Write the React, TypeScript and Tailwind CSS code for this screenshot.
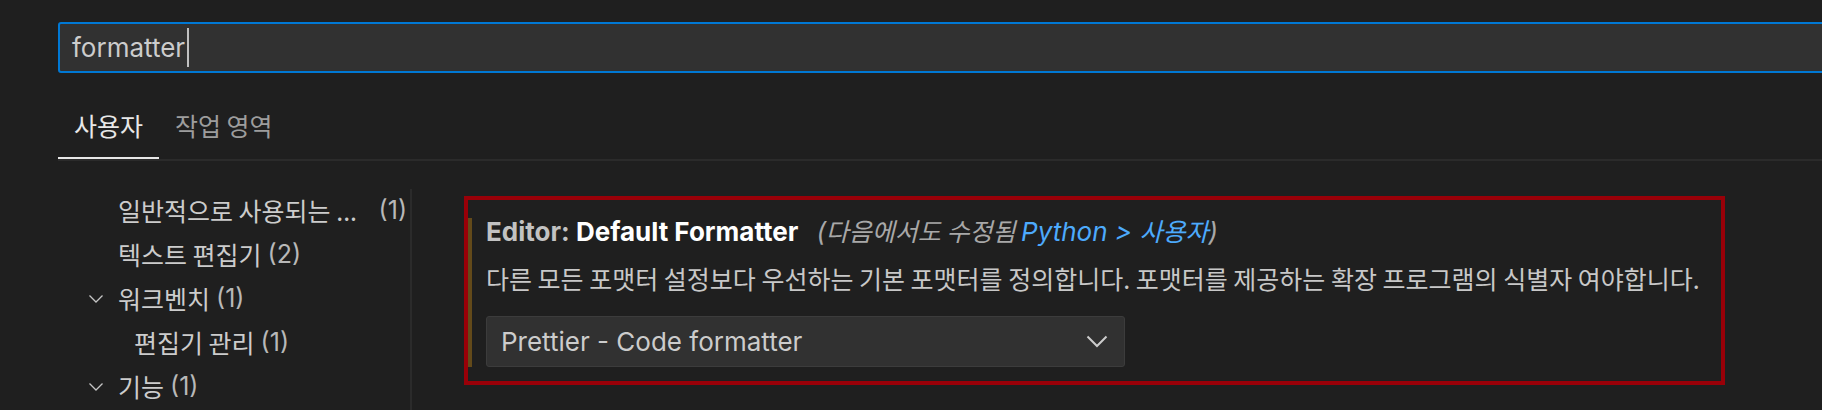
import React from "react";

const KR = "font-['Noto_Sans_CJK_KR','Inter',sans-serif]";

function TreeChevron() {
  return (
    <svg width="16" height="10" viewBox="0 0 16 10" className="block">
      <polyline points="1.5,1.5 8,8 14.5,1.5" fill="none" stroke="#c5c5c5" strokeWidth="1.3" />
    </svg>
  );
}

function Row({ chevron, indent, label, count, spread }: { chevron?: boolean; indent?: boolean; label: string; count: string; spread?: boolean }) {
  return (
    <div className="h-[44px] flex items-center pl-[30px] pr-[3px]">
      <div className="w-[16px] shrink-0 flex items-center">{chevron ? <TreeChevron /> : null}</div>
      <div className={`flex items-center flex-1 ${indent ? "ml-[30px]" : "ml-[14px]"} ${spread ? "justify-between" : ""}`}>
        <span className={`${KR} text-[25px] text-[#cccccc] whitespace-pre`}>{label}</span>
        <span className={`font-['Inter',sans-serif] text-[25px] text-[#b8b8b8] ${spread ? "" : "ml-[6px]"}`}>{count}</span>
      </div>
    </div>
  );
}

export default function App() {
  return (
    <div className="w-[1822px] h-[410px] overflow-hidden bg-[#1f1f1f] font-['Inter','Noto_Sans_CJK_KR',sans-serif]">
      {/* search */}
      <div className="pt-[22px] pl-[58px]">
        <div className="h-[51px] w-[1800px] border-2 border-[#0078d4] rounded-[3px] bg-[#313131] flex items-center pl-[12px]">
          <span className="text-[26px] text-[#cccccc] leading-none">formatter</span>
          <span className="w-[2px] h-[39px] bg-[#c0c0c0] ml-[2px]" />
        </div>
      </div>
      {/* tabs */}
      <div className="ml-[58px] mt-[22px] flex border-b-2 border-[#2b2b2b]">
        <div className={`h-[64px] px-[16px] flex items-center border-b-2 border-[#e7e7e7] ${KR} text-[25px] text-[#e7e7e7]`}>사용자</div>
        <div className={`h-[64px] px-[16px] flex items-center border-b-2 border-transparent ${KR} text-[25px] text-[#9d9d9d]`}>작업 영역</div>
      </div>
      {/* body */}
      <div className="flex mt-[28px]">
        <div className="ml-[58px] w-[354px] h-[240px] border-r-2 border-[#2b2b2b] shrink-0">
          <Row label="일반적으로 사용되는 ..." count="(1)" spread />
          <Row label="텍스트 편집기" count="(2)" />
          <Row chevron label="워크벤치" count="(1)" />
          <Row indent label="편집기 관리" count="(1)" />
          <Row chevron label="기능" count="(1)" />
        </div>
        <div className="ml-[52px] mt-[7px]">
          <div className="w-[1261px] h-[189px] border-4 border-[#990008] pt-[18px] pb-[14px] flex">
            <div className="w-[4px] bg-[#634a1a] shrink-0" />
            <div className="pl-[14px] flex flex-col">
              <div className="h-[26px] flex items-center whitespace-pre">
                <span className="text-[26px] font-bold text-[#c2c2c2]">Editor: </span>
                <span className="text-[26px] font-bold text-[#ffffff]">Default Formatter</span>
                <span className="ml-[18px] italic text-[#a8a8a8] flex items-center">
                  <span className="text-[26px]">(</span>
                  <span className={`${KR} text-[25px]`}>다음에서도 수정됨 </span>
                  <span className="text-[26px] text-[#4daafc]">Python &gt; </span>
                  <span className={`${KR} text-[25px] text-[#4daafc]`}>사용자</span>
                  <span className="text-[26px]">)</span>
                </span>
              </div>
              <div className={`mt-[19px] h-[30px] leading-[30px] ${KR} text-[25px] text-[#c8c8c8] whitespace-pre`}>
                다른 모든 포맷터 설정보다 우선하는 기본 포맷터를 정의합니다. 포맷터를 제공하는 확장 프로그램의 식별자 여야합니다.
              </div>
              <div className="mt-[23px] h-[51px] w-[639px] bg-[#313131] border border-[#3c3c3c] rounded-[3px] flex items-center justify-between pl-[14px] pr-[16px]">
                <span className="text-[26px] text-[#cccccc]">Prettier - Code formatter</span>
                <svg width="22" height="13" viewBox="0 0 22 13" className="block">
                  <polyline points="1.5,1.5 11,11 20.5,1.5" fill="none" stroke="#cccccc" strokeWidth="2" />
                </svg>
              </div>
            </div>
          </div>
        </div>
      </div>
    </div>
  );
}
